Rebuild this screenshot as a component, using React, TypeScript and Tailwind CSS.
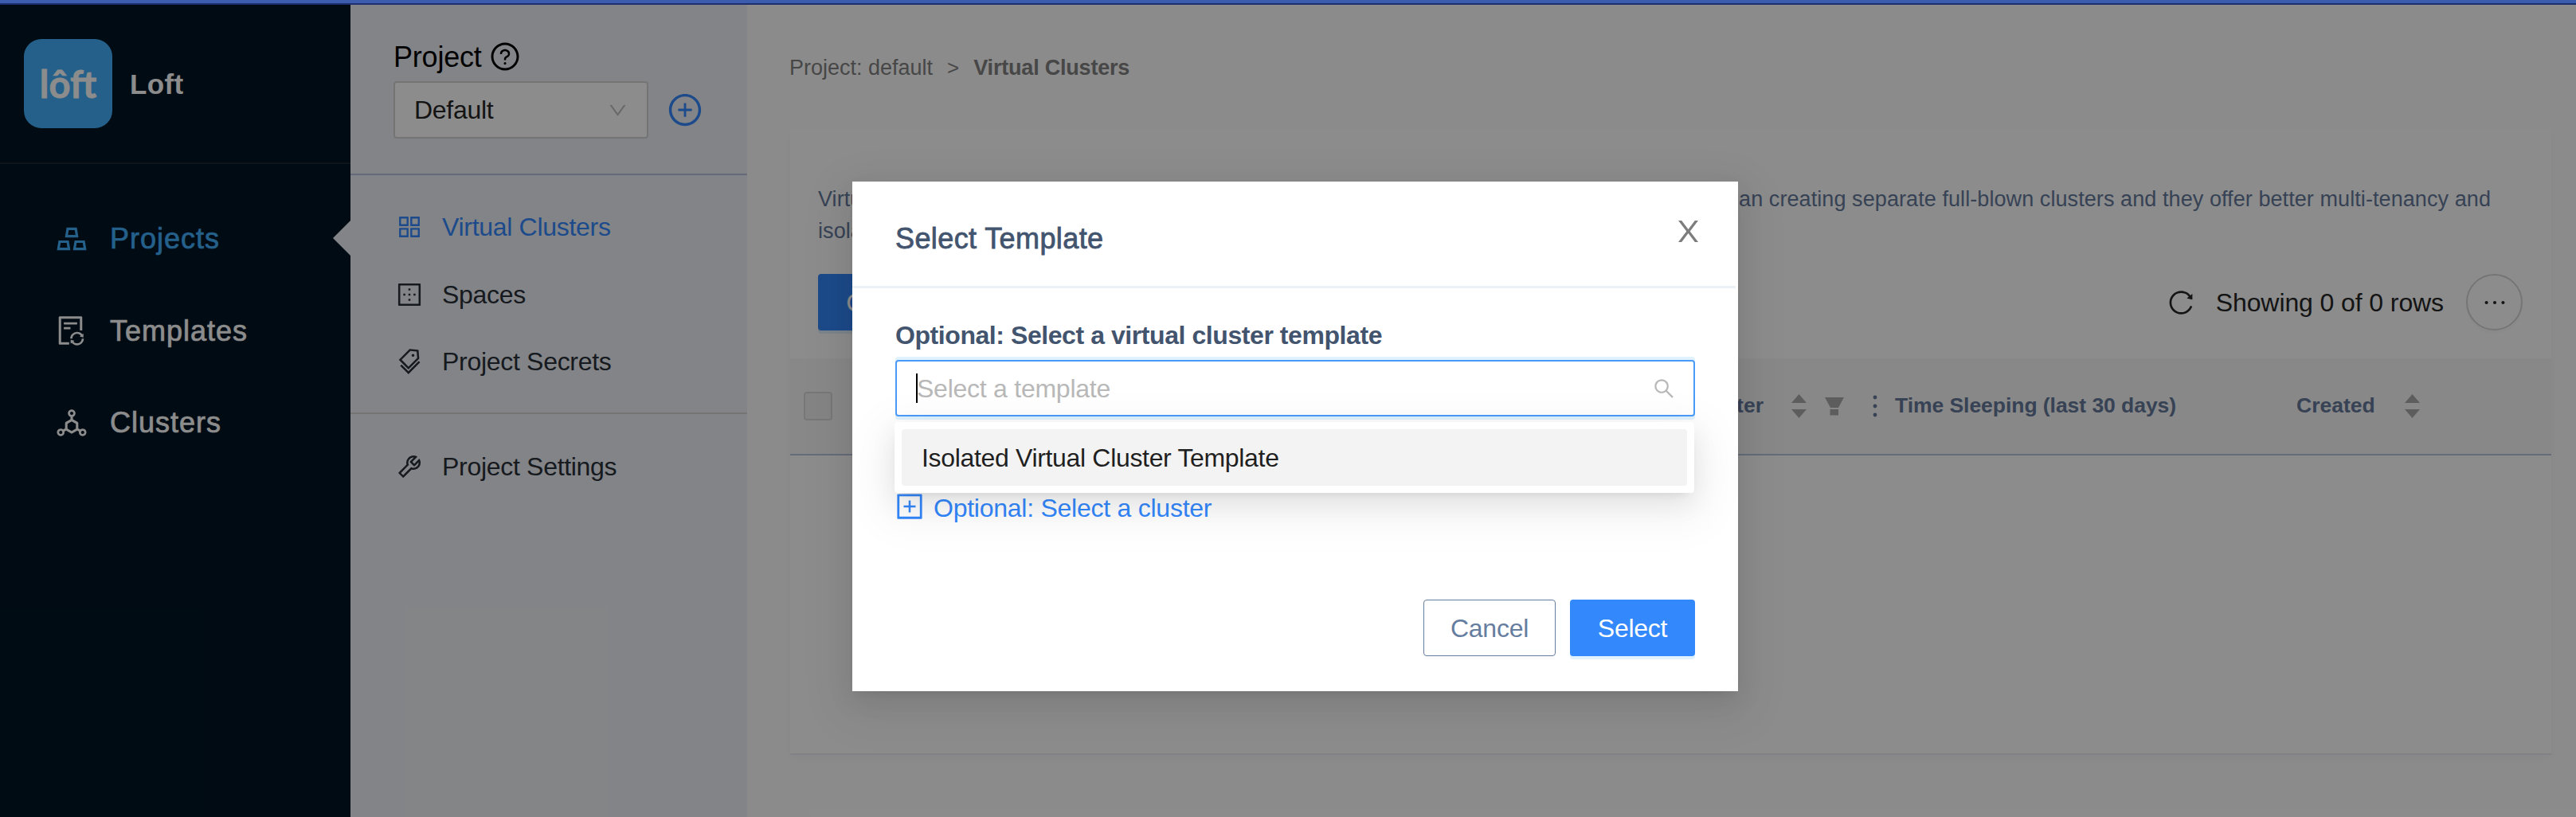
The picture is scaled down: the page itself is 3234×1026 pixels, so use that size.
import type { IconType } from 'react-icons';
import {
  AiOutlineAppstore,
  AiOutlineBorderOuter,
  AiOutlineDeploymentUnit,
  AiOutlineDown,
  AiOutlineEllipsis,
  AiOutlineFileSync,
  AiOutlineGold,
  AiOutlinePlusCircle,
  AiOutlinePlusSquare,
  AiOutlineQuestionCircle,
  AiOutlineReload,
  AiOutlineSearch,
  AiOutlineTags,
  AiOutlineTool,
} from 'react-icons/ai';

type NavItem = { name: string; icon: IconType; size?: number; active?: boolean };

const mainNav: NavItem[] = [
  { name: 'Projects', icon: AiOutlineGold, size: 48, active: true },
  { name: 'Templates', icon: AiOutlineFileSync, size: 43 },
  { name: 'Clusters', icon: AiOutlineDeploymentUnit, size: 44 },
];

const projectNav: NavItem[] = [
  { name: 'Virtual Clusters', icon: AiOutlineAppstore, active: true },
  { name: 'Spaces', icon: AiOutlineBorderOuter },
  { name: 'Project Secrets', icon: AiOutlineTags },
];

function Sidebar() {
  return (
    <aside className="flex w-[440px] shrink-0 flex-col bg-[#001525]">
      <div className="flex h-[200px] items-center gap-[22px] border-b-2 border-[#1b2731] pl-[30px]">
        <div className="flex h-[112px] w-[111px] items-center justify-center rounded-[22px] bg-[#42b0fb]">
          <span className="font-['Lato',sans-serif] text-[47px] leading-none font-bold text-white [-webkit-text-stroke:0.8px]">
            lôft
          </span>
        </div>
        <span className="pt-[2px] text-[35px] font-bold tracking-[0.4px] text-white">Loft</span>
      </div>
      <nav className="flex flex-col gap-[15.5px] pt-[44px]">
        {mainNav.map((item) => (
          <a
            key={item.name}
            className={`relative flex h-[100px] items-center gap-[23px] pl-[64px] text-[36px] tracking-[1px] [-webkit-text-stroke:0.7px] ${
              item.active ? 'text-[#42b0fb]' : 'text-white'
            }`}
          >
            <span className="flex w-[51px] justify-center">
              <item.icon size={item.size} strokeWidth={0} />
            </span>
            {item.name}
            {item.active && (
              <svg className="absolute top-[27px] right-0 h-[44px] w-[22px]" viewBox="0 0 22 44">
                <path d="M22 0v44L0 22z" fill="#eff1f6" />
              </svg>
            )}
          </a>
        ))}
      </nav>
    </aside>
  );
}

function ProjectLink({ item }: { item: NavItem }) {
  return (
    <a
      className={`flex h-[84.5px] items-center gap-[23px] pl-[56px] text-[32px] tracking-[-0.3px] ${
        item.active ? 'text-[#3388fc]' : 'text-[#283039]'
      }`}
    >
      <item.icon size={36} />
      {item.name}
    </a>
  );
}

function ProjectPanel() {
  return (
    <aside className="w-[498px] shrink-0 bg-[#eff1f6]">
      <div className="border-b-2 border-[#b8c3da] pt-[42px] pb-[44px] pl-[54px]">
        <div className="mb-[6px] flex h-[48px] items-center gap-[9px] text-[36px] tracking-[-0.2px] text-black">
          Project
          <AiOutlineQuestionCircle size={40} className="-mt-[2px]" />
        </div>
        <div className="flex items-center gap-[23px]">
          <div className="flex h-[72px] w-[320px] items-center justify-between rounded-[4px] border-2 border-[#d4d4d4] bg-white pr-[23px] pl-[24px] text-[32px] tracking-[-0.3px] text-[#262626]">
            Default
            <AiOutlineDown size={27} className="text-[#bfbfbf]" />
          </div>
          <AiOutlinePlusCircle size={46} className="text-[#3388fc]" />
        </div>
      </div>
      <div className="border-b-2 border-[#d5d5d5] pt-[23px] pb-[21.5px]">
        {projectNav.map((item) => (
          <ProjectLink key={item.name} item={item} />
        ))}
      </div>
      <div className="pt-[24px]">
        <ProjectLink item={{ name: 'Project Settings', icon: AiOutlineTool }} />
      </div>
    </aside>
  );
}

function Sorter() {
  return (
    <svg className="h-[30px] w-[19px] text-[#aaaaaa]" viewBox="0 0 19 30" fill="currentColor">
      <path d="M9.5 0 19 11H0zM0 19h19L9.5 30z" />
    </svg>
  );
}

function TableHeader() {
  return (
    <div className="flex h-[122px] items-center border-b-2 border-[#b8c3da] bg-[#f8f8f8] pl-[17px] text-[26.5px] font-bold text-[#64799b]">
      <span className="h-[36px] w-[36px] rounded-[4px] border-2 border-[#d9d9d9] bg-[#f1f1f1]" />
      <span className="w-[1169px] text-right">Cluster</span>
      <span className="ml-[35px]">
        <Sorter />
      </span>
      <svg className="ml-[23px] h-[23px] w-[24px] text-[#aaaaaa]" viewBox="0 0 24 23" fill="currentColor">
        <path d="M0 0h24l-7 13H7zM6.500 15h10.500v7.500H6.500z" />
      </svg>
      <svg className="ml-[36px] h-[28px] w-[6px]" viewBox="0 0 6 28" fill="currentColor">
        <circle cx="3" cy="3" r="2.400" />
        <circle cx="3" cy="14" r="2.400" />
        <circle cx="3" cy="25" r="2.400" />
      </svg>
      <span className="ml-[22px] w-[504px] tracking-[-0.05px]">Time Sleeping (last 30 days)</span>
      <span className="w-[136px]">Created</span>
      <Sorter />
    </div>
  );
}

function Main() {
  return (
    <main className="flex min-w-0 flex-1 flex-col bg-[#fefefe] pr-[31px] pl-[54px]">
      <div className="-ml-px flex h-[156px] items-center pt-[2px] text-[27px] text-[#828282]">
        Project: default
        <span className="mx-[18px] text-[26px]">&gt;</span>
        <b className="tracking-[-0.2px]">Virtual Clusters</b>
      </div>
      <section className="flex h-[786px] flex-col border-b-2 border-[#ececf4] bg-white shadow-[0_4px_12px_rgba(0,0,0,0.04)]">
        <div className="px-[35px] pt-[68px] text-[27px] leading-[40px] tracking-[0.08px] text-[#64799b]">
          <p className="flex w-[2100px] justify-between whitespace-nowrap">
            <span>Virtual clusters are fully functional and isolated Kubernetes clusters. They are cheaper</span>
            <span>than creating separate full-blown clusters and they offer better multi-tenancy and</span>
          </p>
          <p>isolation.</p>
        </div>
        <div className="mt-[34px] mb-[35px] flex h-[71px] items-center pr-[36px] pl-[35px] text-[32px] tracking-[-0.1px] text-[#262626]">
          <button className="h-[71px] w-[166px] rounded-[4px] bg-[#3388fc] text-white shadow-[0_4px_0_#e0f1fd]">
            Create
          </button>
          <AiOutlineReload size={36} className="mr-[26px] ml-auto" />
          Showing 0 of 0 rows
          <span className="ml-[28px] flex h-[71px] w-[71px] items-center justify-center rounded-full border-2 border-[#d5d5d5] shadow-[0_4px_0_rgba(0,0,0,0.016)]">
            <AiOutlineEllipsis size={38} />
          </span>
        </div>
        <TableHeader />
      </section>
    </main>
  );
}

function SelectTemplateModal() {
  return (
    <div className="relative flex h-[640px] w-[1112px] flex-col bg-white shadow-[0_6px_12px_-8px_rgba(0,0,0,0.12),0_12px_32px_rgba(0,0,0,0.08),0_18px_56px_16px_rgba(0,0,0,0.05)]">
      <div className="mr-[3px] flex h-[134px] items-center justify-between border-b-[3px] border-[#ecf1f6] pt-[13px] pr-[47px] pl-[54px]">
        <h1 className="text-[36px] tracking-[0.4px] text-[#42546e] [-webkit-text-stroke:0.8px]">Select Template</h1>
        <svg className="-mt-[20px] h-[27px] w-[25px]" viewBox="0 0 25 27" fill="#7d7d7d">
          <path d="M0 0h4.200l8.300 11L20.800 0H25L14.700 13.500 25 27h-4.200l-8.300-11-8.300 11H0l10.300-13.500z" />
        </svg>
      </div>
      <div className="px-[54px] pt-[36px]">
        <label className="block h-[54px] text-[32px] leading-[46px] font-bold tracking-[-0.43px] text-[#42546e]">
          Optional: Select a virtual cluster template
        </label>
        <div className="relative">
          <div className="flex h-[71px] items-center rounded-[4px] border-2 border-[#4a9bf9] pr-[22px] pl-[24px] shadow-[0_4px_0_#e0f2fe,0_-4px_0_#e0f2fe]">
            <span className="h-[37px] w-[2px] bg-black" />
            <span className="-ml-[1px] text-[32px] tracking-[-0.25px] text-[#b8b8b8]">Select a template</span>
            <AiOutlineSearch size={30} className="ml-auto text-[#b8b8b8]" />
          </div>
          <div className="absolute top-[78px] -left-px z-10 h-[89px] w-[1004px] rounded-[4px] bg-white p-[9px] shadow-[0_6px_12px_-8px_rgba(0,0,0,0.12),0_12px_32px_rgba(0,0,0,0.08),0_18px_56px_16px_rgba(0,0,0,0.05)]">
            <div className="flex h-[71px] items-center rounded-[4px] bg-[#f3f3f3] pl-[25px] text-[32px] tracking-[-0.33px] text-[#1f1f1f]">
              Isolated Virtual Cluster Template
            </div>
          </div>
        </div>
        <div className="mt-[93px] flex h-[40px] items-center gap-[10px] text-[32px] tracking-[-0.25px] text-[#3388fc]">
          <AiOutlinePlusSquare size={40} className="-ml-[2px]" />
          <span className="pt-[3px]">Optional: Select a cluster</span>
        </div>
      </div>
      <div className="mt-auto mb-[44px] flex justify-end gap-[18px] pr-[54px] text-[32px] tracking-[-0.25px]">
        <button className="h-[71px] w-[166px] rounded-[4px] border border-[#657d9f] text-[#657d9f] shadow-[0_4px_0_rgba(0,0,0,0.016)]">
          Cancel
        </button>
        <button className="h-[71px] w-[157px] rounded-[4px] bg-[#3388fc] text-white shadow-[0_4px_0_#e0f2fe]">
          Select
        </button>
      </div>
    </div>
  );
}

export default function App() {
  return (
    <div className="relative flex h-[1026px] w-[3234px] flex-col overflow-hidden font-['Liberation_Sans',Arial,sans-serif]">
      <div className="relative z-20 h-[6px] shrink-0 border-b-2 border-[#1e2f70] bg-[#3c5cae]" />
      <div className="flex min-h-0 flex-1">
        <Sidebar />
        <ProjectPanel />
        <Main />
      </div>
      {/* Modal backdrop */}
      <div className="absolute inset-0 z-10 bg-black/45 pt-[228px] pl-[1070px]">
        <SelectTemplateModal />
      </div>
    </div>
  );
}
